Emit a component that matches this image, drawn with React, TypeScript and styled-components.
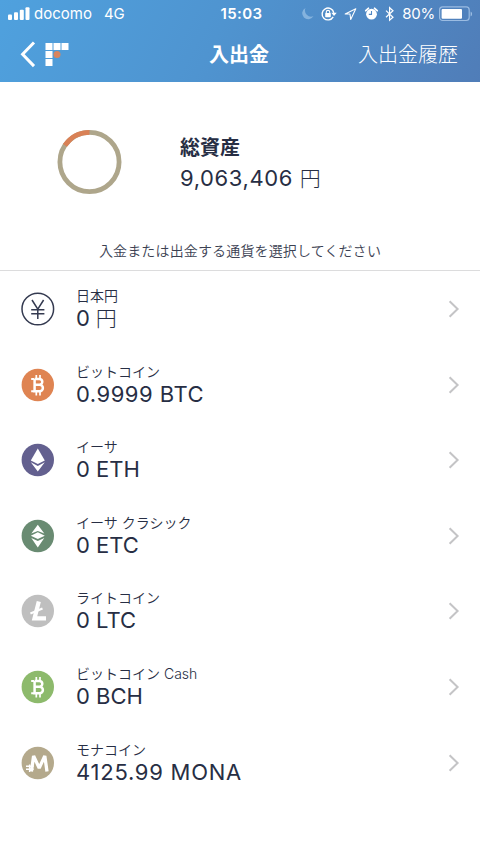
import React from "react";
import styled, { createGlobalStyle } from "styled-components";

const GlobalStyle = createGlobalStyle`
  * {
    margin: 0;
    padding: 0;
    box-sizing: border-box;
  }

  body {
    background: #fff;
    color: #272e44;
    font-family: Inter, "Noto Sans CJK JP", sans-serif;
    overflow: hidden;
  }

  svg {
    display: block;
    flex-shrink: 0;
  }
`;

const Screen = styled.div`
  width: 480px;
  height: 854px;
  overflow: hidden;
  background: #fff;
`;

const Header = styled.header`
  height: 82px;
  color: #fff;
  background: linear-gradient(118deg, #4fa1de 0%, #4f94d0 45%, #507db8 100%);
`;

const StatusBar = styled.div`
  height: 27px;
  padding: 0 7px 0 8px;
  display: grid;
  grid-template-columns: 1fr auto 1fr;
  align-items: center;
  font-size: 15px;
  line-height: 26px;
`;

const StatusGroup = styled.div<{ $end?: boolean }>`
  display: flex;
  align-items: center;
  justify-content: ${(p) => (p.$end ? "flex-end" : "flex-start")};
`;

const StatusText = styled.span<{ $left?: number; $spacing?: number }>`
  margin-left: ${(p) => p.$left || 0}px;
  letter-spacing: ${(p) => p.$spacing || 0}px;
  white-space: nowrap;
`;

const Clock = styled.span`
  padding-left: 2px;
  font-weight: 600;
  letter-spacing: 0.4px;
`;

const NavBar = styled.nav`
  height: 54px;
  padding: 0 22px 0 20px;
  display: grid;
  grid-template-columns: 1fr auto 1fr;
  align-items: center;
  font-size: 20px;
  line-height: 54px;
`;

const BackButton = styled.button`
  display: flex;
  align-items: center;
  gap: 9px;
  background: none;
  border: none;
`;

const Title = styled.h1`
  padding-top: 1px;
  font-size: 20px;
  font-weight: 700;
`;

const HistoryLink = styled.a`
  justify-self: end;
  padding-top: 1px;
  font-weight: 300;
`;

const Summary = styled.section`
  height: 160px;
  padding-left: 57px;
  display: flex;
  align-items: center;
`;

const SummaryText = styled.div`
  margin-left: 57px;
  padding-top: 3px;
`;

const SummaryTitle = styled.h2`
  font-size: 20px;
  font-weight: 700;
  line-height: 30px;
`;

const Amount = styled.p<{ $spacing?: number }>`
  font-size: 22px;
  font-weight: 380;
  line-height: 31px;
  letter-spacing: ${(p) => p.$spacing ?? 0}px;
  white-space: nowrap;
`;

const Unit = styled.span`
  font-size: 21px;
  font-weight: 300;
`;

const Message = styled.p`
  height: 29px;
  border-bottom: 1px solid #dcdcdd;
  color: #3b4152;
  font-size: 14px;
  font-weight: 350;
  line-height: 17px;
  letter-spacing: 0.15px;
  text-align: center;
`;

const List = styled.ul`
  list-style: none;
`;

const Row = styled.li`
  height: 75.55px;
  padding: 1px 20px 0 21px;
  display: flex;
  align-items: center;
`;

const RowText = styled.div`
  flex: 1;
  margin-left: 21px;
  padding-top: 5px;
`;

const CoinName = styled.p`
  font-size: 14px;
  font-weight: 350;
  line-height: 14px;
`;

const SignalIcon = () => (
  <svg width="22" height="14" viewBox="0 0 22 14" fill="#fff">
    <rect x="0" y="7.5" width="4" height="5.5" rx="1" />
    <rect x="6" y="5.2" width="4" height="7.8" rx="1" />
    <rect x="11.8" y="2.8" width="4" height="10.2" rx="1" />
    <rect x="17.5" y="0.3" width="4" height="12.7" rx="1" />
  </svg>
);

const StatusIcons = () => (
  <svg width="98" height="18" viewBox="0 0 98 18" fill="none" stroke="#fff">
    <path d="M6.5 2.9a6 6 0 1 0 8 8.2A6.2 6.2 0 0 1 6.5 2.9Z" fill="#85b3de" stroke="none" />
    <path d="M34.2 11.8a5.9 5.9 0 1 1 .6-4" strokeWidth="1.4" />
    <path d="M32.3 7.8h5.4L35 11Z" fill="#fff" stroke="none" />
    <rect x="26.2" y="8" width="5.6" height="4.2" rx="0.6" fill="#fff" stroke="none" />
    <path d="M27.3 8.3V7.1a1.7 1.7 0 0 1 3.4 0v1.2" strokeWidth="1.1" />
    <path d="m46.2 9 10.6-5.2-5.1 10.6-.7-5.4Z" strokeWidth="1.1" strokeLinejoin="round" />
    <circle cx="72.5" cy="9.2" r="5.4" fill="#fff" stroke="none" />
    <path d="M66.8 5.7l2.6-2.4M78.2 5.7l-2.6-2.4" strokeWidth="1.8" strokeLinecap="round" />
    <path d="M72.5 6v3.4h-2.7" stroke="#4f88c5" strokeWidth="1.1" />
    <path d="m87 5.6 7 6.6-3.4 3V2.7l3.4 3-7 6.6" strokeWidth="1.2" />
  </svg>
);

const BatteryIcon = () => (
  <svg width="34" height="16" viewBox="0 0 34 16">
    <rect x="0.6" y="0.9" width="29.6" height="13.6" rx="3" fill="none" stroke="#9bbce2" strokeWidth="1.2" />
    <rect x="2.6" y="2.9" width="20.4" height="9.8" rx="1" fill="#fff" />
    <path d="M31.6 5.4v5a2.8 2.8 0 0 0 0-5Z" fill="#9bbce2" />
  </svg>
);

const BackArrow = () => (
  <svg width="16" height="28" viewBox="0 0 16 28">
    <path d="M14 1.5 2.6 13.3 14 25.1" fill="none" stroke="#fff" strokeWidth="3" />
  </svg>
);

const Logo = () => (
  <svg width="25" height="24" viewBox="0 0 25 24" fill="#fff">
    <rect x="0.5" y="0" width="7" height="7" />
    <rect x="8.5" y="0" width="7" height="7" />
    <rect x="16.5" y="0" width="7" height="7" />
    <rect x="0.5" y="8" width="7" height="7" />
    <rect x="0.5" y="16" width="7" height="7" />
    <circle cx="12" cy="11.6" r="3.5" fill="#d9855f" />
  </svg>
);

const AssetChart = () => (
  <svg width="66" height="66" viewBox="0 0 66 66" fill="none" strokeWidth="4.8">
    <circle cx="32.5" cy="33" r="29.6" stroke="#aea68b" />
    <path d="M7.96 16.45A29.6 29.6 0 0 1 32.5 3.4" stroke="#d98156" />
  </svg>
);

const Chevron = () => (
  <svg width="12" height="20" viewBox="0 0 12 20">
    <path d="m1.6 2.2 8 7.8-8 7.8" fill="none" stroke="#c4c4c6" strokeWidth="2" />
  </svg>
);

const YenMark = () => (
  <g fill="none" stroke="#343a50" strokeWidth="1.5">
    <circle cx="16.8" cy="17" r="15.8" />
    <path d="m11 8 5.8 9.2 5.8-9.2M16.8 17v10M10.2 17.8h13.2M10.2 21.7h13.2" />
  </g>
);

const BitcoinMark = () => (
  <g fill="none" stroke="#fff">
    <path d="M15.3 7v4M19 7v4M15.3 23.4v4M19 23.4v4" strokeWidth="1.7" />
    <path d="M10.2 10.9h3M10.2 23.3h3" strokeWidth="2" />
    <path
      d="M13.6 10.9h4.8a2.8 2.8 0 0 1 0 5.8h-4.8M18.6 16.7a3.3 3.3 0 0 1 0 6.6h-5V10.9"
      strokeWidth="2.5"
    />
  </g>
);

const EtherMark = () => (
  <g fill="#fff">
    <path d="m16.8 5.4 7 12.2-7 3.5-7-3.5Z" />
    <path d="m9.8 19.2 7 3.7 7-3.7-7 9.3Z" />
  </g>
);

const ClassicMark = () => (
  <g fill="#fff">
    <path d="m16.8 5.7 6.5 8.9-6.5-2.7-6.5 2.7Z" />
    <path d="m16.8 13.3 7 3.4-7 3.4-7-3.4Z" />
    <path d="m10.3 19.1 6.5 2.8 6.5-2.8-6.5 9.4Z" />
  </g>
);

const LitecoinMark = () => (
  <g fill="none" stroke="#fff">
    <path d="M17.8 7.5 13.5 24.4H25" strokeWidth="4.2" />
    <path d="m9.4 19.4 12.1-4.9" strokeWidth="2.2" />
  </g>
);

const MonaMark = () => (
  <g fill="none" stroke="#fff">
    <path d="M10.4 25.6 12.6 10l5.6 12 5.6-12 2.2 15.6" strokeWidth="3.3" strokeLinejoin="bevel" />
    <path d="M5 20.2h7.6M5 23.2h7.6M8.6 18.6V26" strokeWidth="1.4" />
  </g>
);

const CoinIcon = ({ color, children }: { color?: string; children: React.ReactNode }) => (
  <svg width="34" height="34" viewBox="0 0 34 34">
    {color && <circle cx="16.8" cy="17" r="16.2" fill={color} />}
    {children}
  </svg>
);

const coins = [
  { name: "日本円", amount: "0", unit: "円", icon: <YenMark /> },
  { name: "ビットコイン", amount: "0.9999 BTC", color: "#df8452", icon: <BitcoinMark />, spacing: 0.5 },
  { name: "イーサ", amount: "0 ETH", color: "#63608f", icon: <EtherMark /> },
  { name: "イーサ クラシック", amount: "0 ETC", color: "#698b72", icon: <ClassicMark /> },
  { name: "ライトコイン", amount: "0 LTC", color: "#bfbfbf", icon: <LitecoinMark /> },
  { name: "ビットコイン Cash", amount: "0 BCH", color: "#8dba6c", icon: <BitcoinMark /> },
  { name: "モナコイン", amount: "4125.99 MONA", color: "#b4a98c", icon: <MonaMark />, spacing: 0.75 },
];

const App = () => {
  return (
    <Screen>
      <GlobalStyle />
      <Header>
        <StatusBar>
          <StatusGroup>
            <SignalIcon />
            <StatusText $left={4}>docomo</StatusText>
            <StatusText $left={12}>4G</StatusText>
          </StatusGroup>
          <Clock>15:03</Clock>
          <StatusGroup $end>
            <StatusIcons />
            <StatusText $left={5} $spacing={-0.2}>80%</StatusText>
            <StatusText $left={4}>
              <BatteryIcon />
            </StatusText>
          </StatusGroup>
        </StatusBar>
        <NavBar>
          <BackButton type="button" aria-label="戻る">
            <BackArrow />
            <Logo />
          </BackButton>
          <Title>入出金</Title>
          <HistoryLink>入出金履歴</HistoryLink>
        </NavBar>
      </Header>
      <Summary>
        <AssetChart />
        <SummaryText>
          <SummaryTitle>総資産</SummaryTitle>
          <Amount $spacing={0.6}>
            9,063,406 <Unit>円</Unit>
          </Amount>
        </SummaryText>
      </Summary>
      <Message>入金または出金する通貨を選択してください</Message>
      <List>
        {coins.map((coin) => (
          <Row key={coin.name}>
            <CoinIcon color={coin.color}>{coin.icon}</CoinIcon>
            <RowText>
              <CoinName>{coin.name}</CoinName>
              <Amount $spacing={coin.spacing}>
                {coin.amount}
                {coin.unit && <Unit> {coin.unit}</Unit>}
              </Amount>
            </RowText>
            <Chevron />
          </Row>
        ))}
      </List>
    </Screen>
  );
};

export default App;
